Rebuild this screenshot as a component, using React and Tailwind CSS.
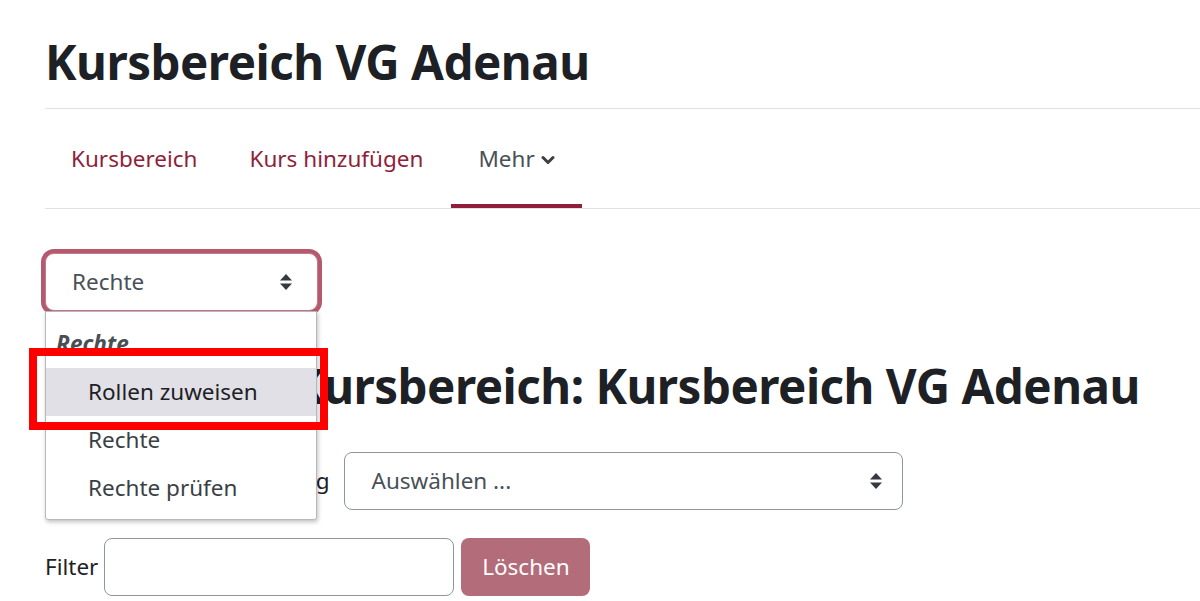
import React from 'react';

const SortArrows = () => (
  <svg width="14" height="18" viewBox="0 0 14 18" className="shrink-0">
    <path d="M7 1 L13 7.5 H1 Z" fill="#343a40" />
    <path d="M7 17 L13 10.5 H1 Z" fill="#343a40" />
  </svg>
);

const Chevron = () => (
  <svg width="14" height="10" viewBox="0 0 14 10" className="ml-[6px] mt-[2px]">
    <path d="M2 2.5 L7 7.5 L12 2.5" fill="none" stroke="#3a3f45" strokeWidth="3" strokeLinecap="round" strokeLinejoin="round" />
  </svg>
);

export default function App() {
  return (
    <div
      className="w-[1200px] h-[601px] overflow-hidden bg-white pl-[45px] text-[#1d2125] text-[22.5px]"
      style={{ fontFamily: '"Noto Sans", "Open Sans", sans-serif' }}
    >
      {/* Seitenkopf */}
      <h1 className="pt-[27px] h-[108px] text-[47.5px] font-bold leading-[70px] tracking-[-0.5px]">
        Kursbereich VG Adenau
      </h1>

      {/* Sekundäre Navigation */}
      <nav className="h-[101px] border-y border-[#dee2e6] flex items-stretch">
        <a className="px-[26px] flex items-center text-[#8f1f3b]">Kursbereich</a>
        <a className="px-[26px] flex items-center text-[#8f1f3b]">Kurs hinzufügen</a>
        <a className="px-[27px] ml-[2px] flex items-center text-[#495057] border-b-[4px] border-[#8f1f3b] pt-[4px]">
          Mehr
          <Chevron />
        </a>
      </nav>

      <div className="relative">
        {/* Auswahl mit geöffnetem Menü */}
        <div className="absolute left-0 top-[44px] z-10 w-[273px]">
          <div className="h-[58px] rounded-[9px] border border-[#c47a8c] ring-[4px] ring-[#b5596f] flex items-center justify-between pl-[26px] pr-[24px] text-[#495057] bg-white">
            <span>Rechte</span>
            <SortArrows />
          </div>
          <ul className="w-[272px] bg-white border border-[#b8b8bc] rounded-b-[3px] shadow-[1px_2px_4px_rgba(0,0,0,0.25)] pt-[8px] pb-[7px] text-[#3a3f45]">
            <li className="h-[48px] flex items-center pl-[10px] font-bold italic text-[#4a4f55]">Rechte</li>
            <li className="h-[48px] flex items-center pl-[42px] bg-[#e1e0e6] text-[#1d2125]">Rollen zuweisen</li>
            <li className="h-[48px] flex items-center pl-[42px]">Rechte</li>
            <li className="h-[48px] flex items-center pl-[42px]">Rechte prüfen</li>
          </ul>
          {/* Markierung */}
          <div className="absolute left-[-16px] top-[95px] w-[299px] h-[82px] border-[8px] border-[#ff0000]" />
        </div>

        <h2 className="pt-[147px] pl-[3px] text-[47.5px] font-bold leading-[60px] tracking-[-0.5px]">
          Rechte im Kursbereich: Kursbereich VG Adenau
        </h2>

        <div className="mt-[36px] flex items-center gap-[14px]">
          <label>Erweiterte Rollenänderung</label>
          <div className="w-[559px] h-[58px] rounded-[8px] border border-[#8f959e] flex items-center justify-between pl-[27px] pr-[19px] text-[#495057]">
            <span>Auswählen ...</span>
            <SortArrows />
          </div>
        </div>

        <div className="mt-[28px] flex items-center">
          <label className="mr-[6px]">Filter</label>
          <div className="w-[350px] h-[58px] rounded-[8px] border border-[#8f959e]" />
          <button className="ml-[7px] w-[129px] h-[58px] rounded-[8px] bg-[#b36c79] text-white">
            Löschen
          </button>
        </div>
      </div>
    </div>
  );
}
